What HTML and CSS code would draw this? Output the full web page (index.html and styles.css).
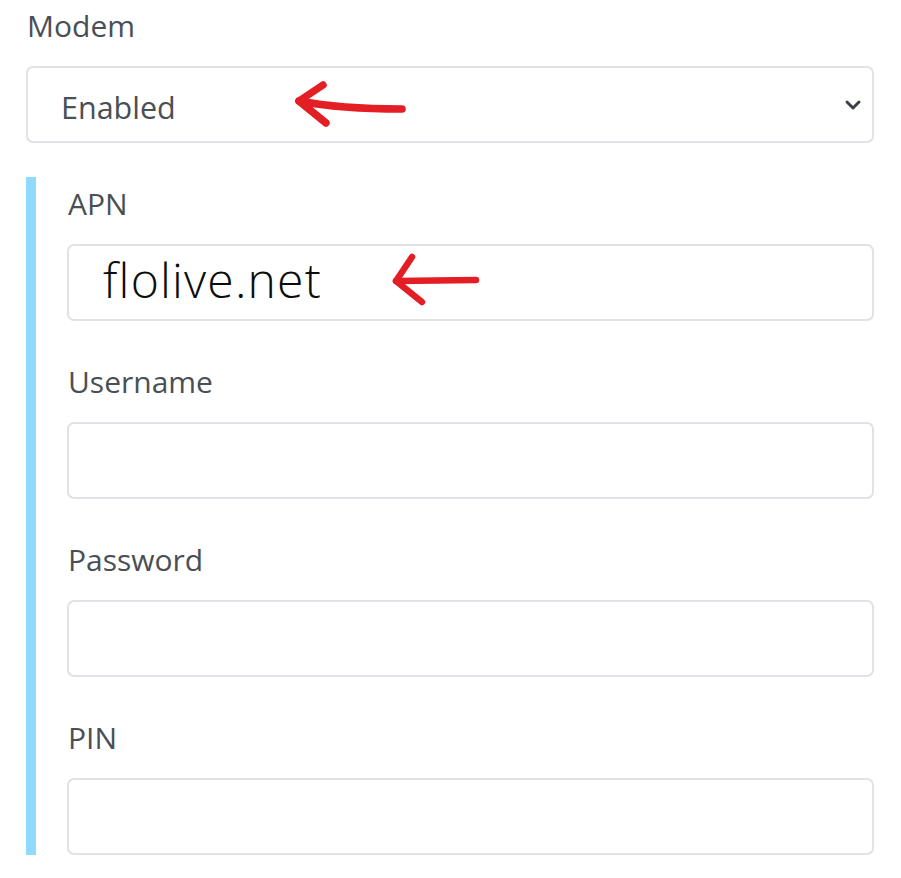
FILE: index.html
```html
<!DOCTYPE html>
<html lang="en">
<head>
<meta charset="utf-8">
<title>Modem settings</title>
<link rel="stylesheet" href="styles.css">
</head>
<body>
<div class="page">
  <div class="field">
    <div class="label">Modem</div>
    <div class="select">
      <span class="select-value">Enabled</span>
      <svg class="chevron" width="18" height="12" viewBox="0 0 18 12"><path d="M3 3 L9 9 L15 3" fill="none" stroke="#3b4046" stroke-width="3" stroke-linecap="round" stroke-linejoin="round"/></svg>
    </div>
  </div>
  <div class="group">
    <div class="field">
      <div class="label">APN</div>
      <div class="input"><span class="input-value">flolive.net</span></div>
    </div>
    <div class="field">
      <div class="label">Username</div>
      <div class="input"></div>
    </div>
    <div class="field">
      <div class="label">Password</div>
      <div class="input"></div>
    </div>
    <div class="field last">
      <div class="label">PIN</div>
      <div class="input"></div>
    </div>
  </div>
  <svg class="annotations" width="901" height="878" viewBox="0 0 901 878">
    <g fill="none" stroke="#e31e24" stroke-linecap="round" stroke-linejoin="round">
      <path d="M402 109 C370 109 330 107 299 101" stroke-width="7.5"/>
      <path d="M323 85 L299 101 L326 123" stroke-width="7.5"/>
      <path d="M476 280 L396 281" stroke-width="6.5"/>
      <path d="M412 257 L396 281 L422 302" stroke-width="6.5"/>
    </g>
  </svg>
</div>
</body>
</html>
```

FILE: styles.css
```css
html, body {
  margin: 0;
  padding: 0;
  background: #ffffff;
}

.page {
  position: relative;
  width: 901px;
  height: 878px;
  box-sizing: border-box;
  padding: 6px 27px 0 26px;
  font-family: "Open Sans", "Noto Sans", sans-serif;
  color: #4a4f55;
}

.label {
  font-size: 30px;
  line-height: 36px;
  padding-top: 2px;
  margin-bottom: 22px;
  padding-left: 1px;
}

.select,
.input {
  box-sizing: border-box;
  height: 77px;
  border: 2px solid #dfe2e6;
  border-radius: 7px;
  background: #fff;
  display: flex;
  align-items: center;
}

.select {
  justify-content: space-between;
  padding: 0 10px 0 33px;
  font-size: 30.5px;
  color: #4a4f55;
}

.select-value {
  line-height: 1;
  padding-top: 5px;
}

.chevron {
  display: block;
}

.group {
  margin-top: 34px;
  padding-top: 7px;
  padding-left: 31px;
  border-left: 10px solid #8fdbff;
}

.group .field {
  margin-bottom: 41px;
}

.group .field.last {
  margin-bottom: 0;
}

.input {
  padding: 0 0 0 34px;
}

.input-value {
  font-size: 48px;
  color: #0c0c0c;
  font-weight: 300;
  letter-spacing: 1.2px;
  line-height: 1;
  padding-bottom: 6px;
}

.annotations {
  position: absolute;
  top: 0;
  left: 0;
  pointer-events: none;
}
```
